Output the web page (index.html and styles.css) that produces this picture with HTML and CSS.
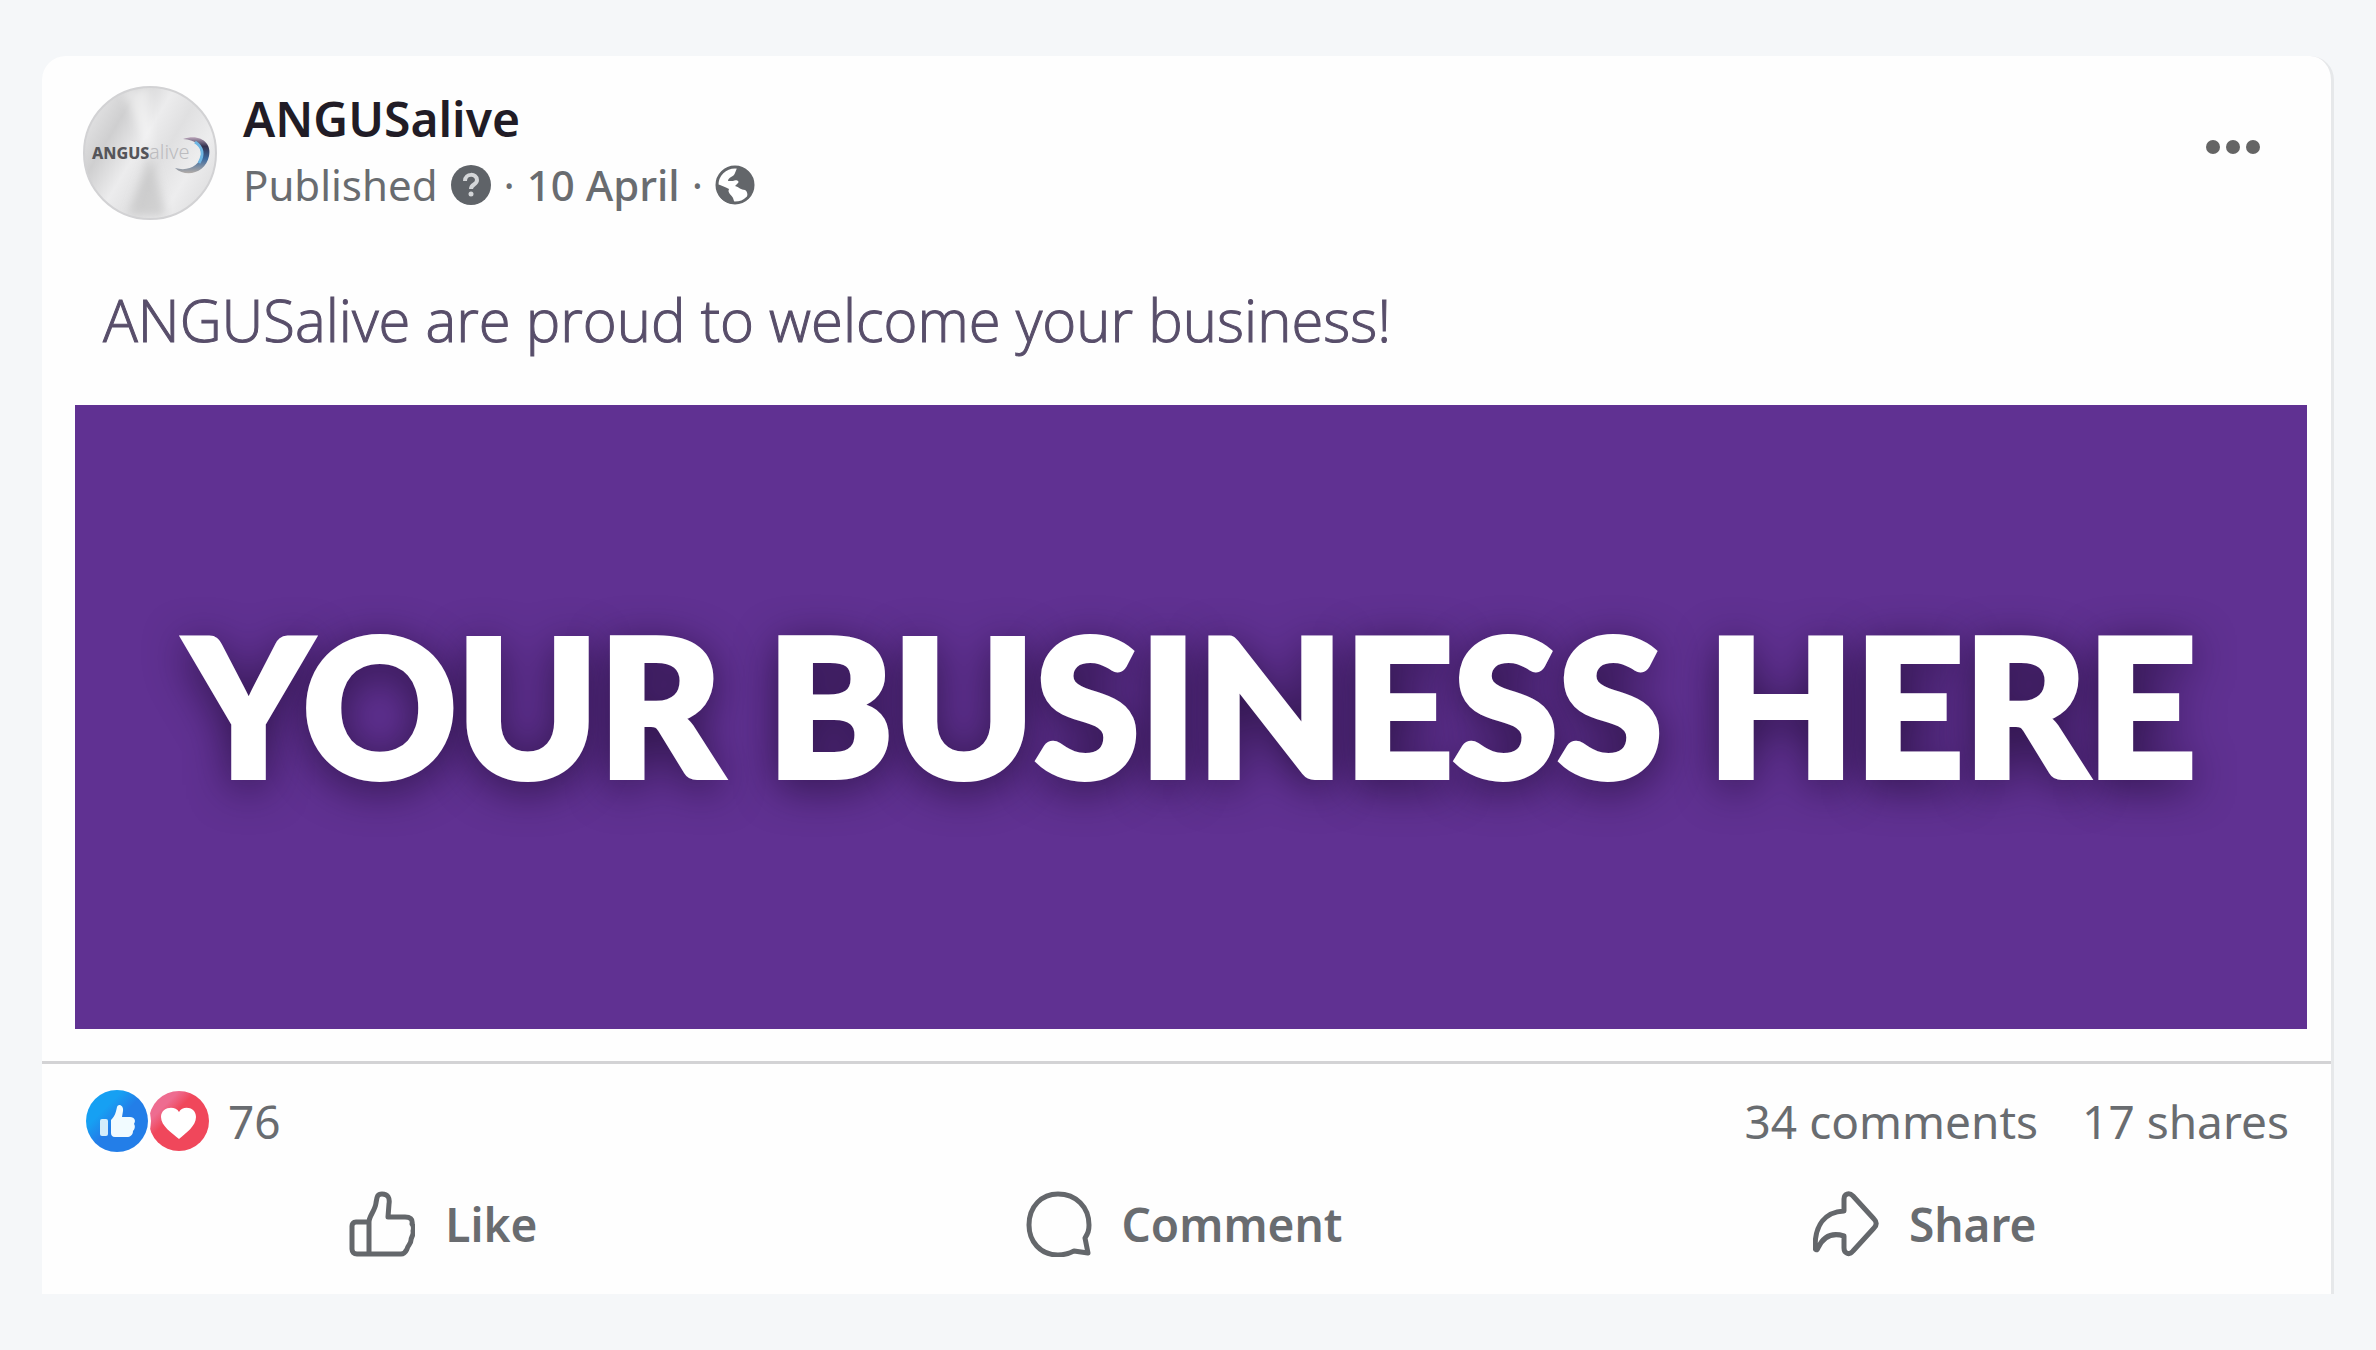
FILE: index.html
```html
<!DOCTYPE html>
<html lang="en">
<head>
  <meta charset="UTF-8">
  <meta name="viewport" content="width=device-width, initial-scale=1.0">
  <title>ANGUSalive</title>
  <link rel="stylesheet" href="styles.css">
</head>
<body>
  <article class="post">
    <header class="post-header">
      <svg class="avatar" viewBox="0 0 134 134" role="img" aria-label="ANGUSalive logo">
        <defs>
          <linearGradient id="metal" x1="0" y1="0.2" x2="1" y2="0.8">
            <stop offset="0" stop-color="#e6e6e7"/>
            <stop offset="0.22" stop-color="#cfcfd0"/>
            <stop offset="0.42" stop-color="#ececed"/>
            <stop offset="0.58" stop-color="#e0e0e1"/>
            <stop offset="0.78" stop-color="#ededee"/>
            <stop offset="1" stop-color="#dcdcdd"/>
          </linearGradient>
          <linearGradient id="ring" x1="0" y1="0" x2="0" y2="1">
            <stop offset="0" stop-color="#b9a3b8"/>
            <stop offset="0.25" stop-color="#35324f"/>
            <stop offset="0.6" stop-color="#3d6a9e"/>
            <stop offset="1" stop-color="#b4ada8"/>
          </linearGradient>
          <filter id="soft">
            <feGaussianBlur stdDeviation="5"/>
          </filter>
          <clipPath id="disc">
            <circle cx="67" cy="67" r="65"/>
          </clipPath>
        </defs>
        <circle cx="67" cy="67" r="66" fill="url(#metal)" stroke="#d2d2d4" stroke-width="2"/>
        <g clip-path="url(#disc)" filter="url(#soft)">
          <path d="M67 67 L40 5 L66 0 Z" fill="#fff" opacity="0.5"/>
          <path d="M67 67 L46 129 L84 131 Z" fill="#b8b8b8" opacity="0.5"/>
        </g>
        <path d="M100 53 C118 47 129 58 126 70 C123 86 104 93 92 82 C106 86 117 79 118 69 C119 59 112 54 100 53 Z" fill="url(#ring)"/>
        <path d="M112 56 C120 61 121 69 116 77" fill="none" stroke="#6fb6e3" stroke-width="3"/>
        <text class="logo-bold" x="9" y="73">ANGUS</text>
        <text class="logo-light" x="66" y="73">alive</text>
      </svg>
      <div class="author">
        <h1><a href="#page">ANGUSalive</a></h1>
        <div class="meta">
          <span class="status">Published</span>
          <svg class="meta-icon" viewBox="0 0 40 40" aria-hidden="true">
            <circle cx="20" cy="20" r="20" fill="#5f6368"/>
            <path d="M14 16 C14 8 26 8 26 15 C26 20 20 19 20 24" fill="none" stroke="#d4d6d8" stroke-width="4"/>
            <circle cx="20" cy="29" r="2.5" fill="#d4d6d8"/>
          </svg>
          <span>·</span>
          <a class="date" href="#post">10 April</a>
          <span>·</span>
          <svg class="meta-icon" viewBox="0 0 40 40" role="img" aria-label="Public">
            <circle cx="20" cy="20" r="18" fill="#fff" stroke="#63666a" stroke-width="3"/>
            <path d="M22 3 C34 3 40 14 38 23 C37 29 34 33 31 35 C33 31 33 27 30 25 C26 25 24 22 20 21 L23 18 C25 16 21 14 18 16 L13 16 C13 12 19 12 20 8 Z" fill="#63666a"/>
            <path d="M2 19 C6 20 10 22 14 24 C12 28 17 30 18 33 L20 39 C9 39 1 31 2 19 Z" fill="#63666a"/>
          </svg>
        </div>
      </div>
      <button class="more" type="button" aria-label="More options">
        <svg viewBox="0 0 56 16" aria-hidden="true">
          <circle cx="8" cy="8" r="7"/>
          <circle cx="28" cy="8" r="7"/>
          <circle cx="48" cy="8" r="7"/>
        </svg>
      </button>
    </header>

    <p class="post-text">ANGUSalive are proud to welcome your business!</p>

    <div class="banner">
      <h2>YOUR BUSINESS HERE</h2>
    </div>

    <div class="stats">
      <svg class="reactions" viewBox="0 0 124 62" role="img" aria-label="Like and love">
        <defs>
          <linearGradient id="blue" x1="0" y1="0" x2="1" y2="1">
            <stop offset="0.3" stop-color="#16a0f3"/>
            <stop offset="0.5" stop-color="#237ee8"/>
          </linearGradient>
          <linearGradient id="red" x1="0" y1="0" x2="1" y2="1">
            <stop offset="0.25" stop-color="#ee6c90"/>
            <stop offset="0.4" stop-color="#f0475b"/>
          </linearGradient>
        </defs>
        <circle cx="93" cy="31" r="30" fill="url(#red)"/>
        <circle cx="31" cy="31" r="34" fill="#fff"/>
        <circle cx="31" cy="31" r="31" fill="url(#blue)"/>
        <rect x="14" y="29" width="8" height="17" rx="2" fill="#d4eefb"/>
        <path d="M25 30 C29 26 30 22 31 17 C32 13 38 15 37 21 L36 27 L44 27 C49 27 50 31 48 34 C50 37 48 40 47 41 C47 45 44 47 41 47 L29 47 C26 47 25 45 25 43 Z" fill="#f1fbff"/>
        <path d="M93 49 C86 43 75 36 75 27 C75 17 89 15 93 22 C97 15 110 17 110 27 C110 36 100 43 93 49 Z" fill="#fff"/>
      </svg>
      <span class="count">76</span>
      <a class="comments" href="#comments">34 comments</a>
      <a href="#shares">17 shares</a>
    </div>

    <div class="actions">
      <button type="button">
        <svg viewBox="0 0 66 66" aria-hidden="true">
          <path d="M20 31 L7 31 C4 31 3 33 3 35 L3 58 C3 61 5 63 8 63 L52 63 C56 63 57 60 58 58 C59 54 62 53 62 49 C62 46 65 44 64 40 C65 36 64 34 63 33 C64 28 61 26 56 26 L39 26 L40 13 C41 7 39 3 33 3 C28 3 28 6 27 12 C26 20 20 25 20 31 Z M20 31 L20 63"/>
        </svg>
        Like
      </button>
      <button type="button">
        <svg viewBox="0 0 66 66" aria-hidden="true">
          <path d="M62 62 L48 60 C42 63 37 64 32 64 C14 64 3 50 3 34 C3 15 16 3 32 3 C50 3 63 16 63 34 C63 40 62 42 59 47 Z"/>
        </svg>
        Comment
      </button>
      <button type="button">
        <svg viewBox="0 0 66 66" aria-hidden="true">
          <path d="M31 8 C31 3 36 1 40 5 L61 28 C64 31 64 34 61 37 L40 60 C36 65 31 62 31 57 L31 45 C18 41 10 46 5 57 C4 60 2 59 2 56 C2 34 12 21 31 20 Z"/>
        </svg>
        Share
      </button>
    </div>
  </article>
</body>
</html>
```
FILE: styles.css
```css
* {
  box-sizing: border-box;
}

body {
  margin: 0;
  padding: 56px 42px;
  background-color: #f5f7f9;
  color: #696c70;
  font-family: "Noto Sans", "Open Sans", sans-serif;
  font-size: 46px;
}

a {
  color: inherit;
  text-decoration: none;
}

button {
  border: none;
  background: none;
  color: inherit;
  font: inherit;
  cursor: pointer;
}

.post {
  background-color: #fefefe;
  border-right: 3px solid #e6e8ea;
  border-radius: 24px 24px 0 0;
}

/* Header */
.post-header {
  display: flex;
  align-items: flex-start;
  gap: 26px;
  padding: 30px 70px 0 41px;
}

.avatar {
  width: 134px;
  height: 134px;
}

.logo-bold,
.logo-light {
  font-size: 16px;
  font-weight: 800;
  fill: #55555a;
}

.logo-light {
  font-size: 20px;
  font-weight: 300;
  fill: #bcbcbf;
}

.author {
  flex: 1;
}

.author h1 {
  margin: 0;
  color: #211c26;
  font-size: 48px;
  font-weight: 600;
  line-height: 66px;
}

.meta {
  display: flex;
  align-items: center;
  gap: 12px;
  font-size: 42px;
  line-height: 66px;
}

.status {
  margin-right: 2px;
}

.meta-icon {
  width: 40px;
  height: 40px;
}

.date {
  font-weight: 500;
}

.more {
  padding: 53px 0;
}

.more svg {
  display: block;
  width: 56px;
  height: 16px;
  fill: #656565;
}

.post-text {
  margin: 0;
  padding: 60px 61px 45px;
  color: #584e6a;
  font-family: "Open Sans", sans-serif;
  font-size: 58px;
  font-weight: 300;
  line-height: 80px;
  -webkit-text-stroke: 1px #584e6a;
}

/* Banner */
.banner {
  margin: 0 24px 32px 33px;
  padding: 166px 40px 194px;
  background-color: #603192;
  text-align: center;
}

.banner h2 {
  margin: 0;
  color: #fff;
  font-family: Lato, sans-serif;
  font-size: 190px;
  font-weight: 900;
  line-height: 264px;
  white-space: nowrap;
  text-shadow: 0 8px 44px rgba(20, 5, 35, 0.8);
  -webkit-text-stroke: 6px #fff;
}

/* Counts */
.stats {
  display: flex;
  align-items: center;
  gap: 18px;
  padding: 19px 42px 0 44px;
  border-top: 3px solid #d3d3d5;
  line-height: 76px;
}

.reactions {
  width: 124px;
  height: 62px;
}

.comments {
  margin-left: auto;
  margin-right: 26px;
}

/* Like / Comment / Share */
.actions {
  display: grid;
  grid-template-columns: repeat(3, 1fr);
  padding: 21px 36px 26px 31px;
}

.actions button {
  display: flex;
  align-items: center;
  justify-content: center;
  gap: 30px;
  padding: 0;
  font-weight: 600;
  line-height: 88px;
}

.actions svg {
  width: 66px;
  height: 66px;
  fill: none;
  stroke: #64676b;
  stroke-width: 5px;
  stroke-linejoin: round;
}
```
